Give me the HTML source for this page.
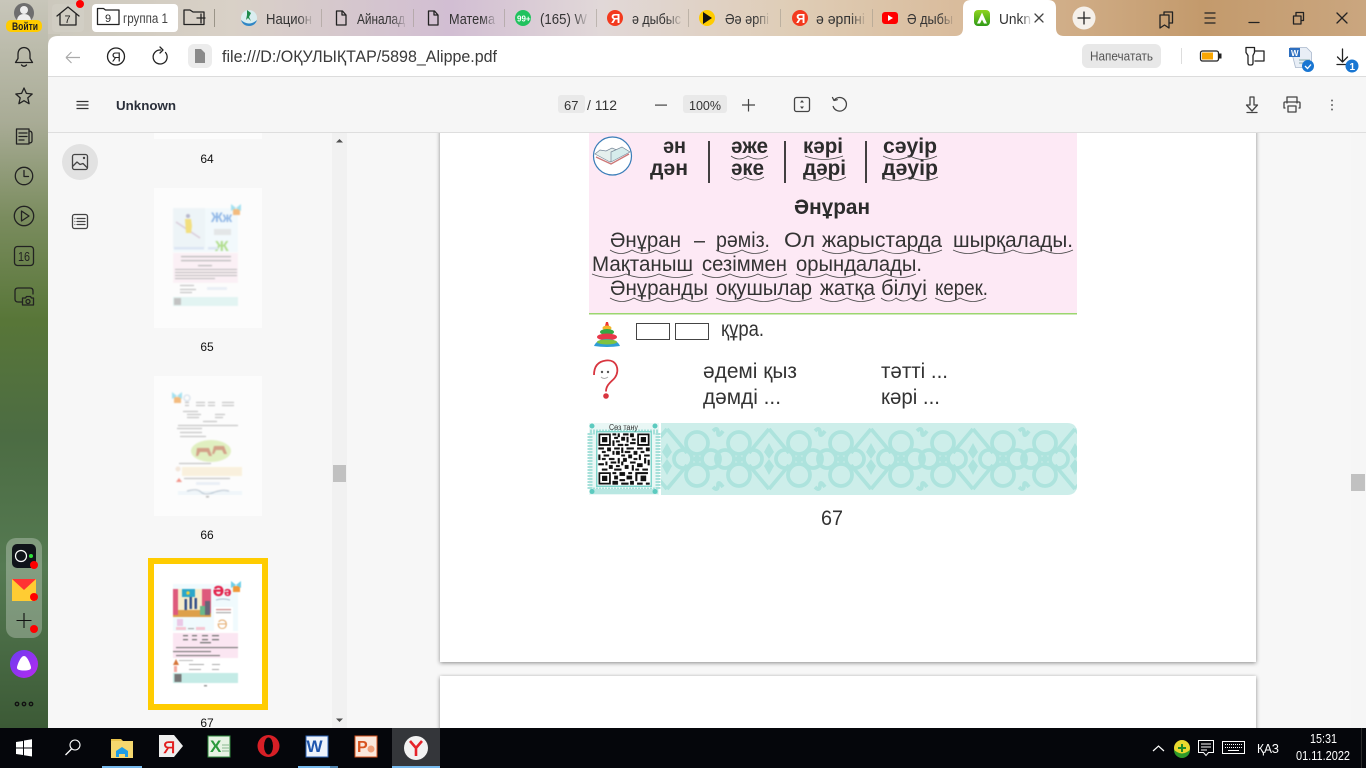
<!DOCTYPE html>
<html lang="ru"><head><meta charset="utf-8"><title>Unknown</title>
<style>
html,body{margin:0;padding:0;width:1366px;height:768px;overflow:hidden;background:#000}
svg{display:block}
text{font-family:"Liberation Sans","DejaVu Sans","Noto Sans CJK SC",sans-serif}
.s{fill:none;stroke:#222;stroke-width:1.3;stroke-linecap:round;stroke-linejoin:round}
.g{fill:none;stroke:#444;stroke-width:1.3;stroke-linecap:round;stroke-linejoin:round}
.a{fill:none;stroke:#4a4a4a;stroke-width:.8}
.b{font-weight:bold;fill:#2c2c2c;font-size:21px}
.r{fill:#333;font-size:21px}
.tab{font-size:14.5px}
</style></head><body>
<svg width="1366" height="768" viewBox="0 0 1366 768" xmlns="http://www.w3.org/2000/svg">
<defs>
<linearGradient id="top" x1="0" x2="1" y1="0" y2="0">
<stop offset="0" stop-color="#c8c6ba"/><stop offset=".17" stop-color="#d9d1c7"/><stop offset=".33" stop-color="#d2bed3"/><stop offset=".44" stop-color="#e1d8d8"/><stop offset=".58" stop-color="#dfcdb6"/><stop offset=".72" stop-color="#d8b998"/><stop offset=".88" stop-color="#c39a6c"/><stop offset="1" stop-color="#caa67f"/>
</linearGradient>
<linearGradient id="side" x1="0" x2="0" y1="0" y2="1">
<stop offset="0" stop-color="#c8c6ba"/><stop offset=".17" stop-color="#a8ab95"/><stop offset=".3" stop-color="#7a8c5e"/><stop offset=".44" stop-color="#587638"/><stop offset=".6" stop-color="#4c6c43"/><stop offset=".78" stop-color="#557a52"/><stop offset="1" stop-color="#3c5a36"/>
</linearGradient>
<linearGradient id="fade" x1="0" x2="1" y1="0" y2="0"><stop offset=".7" stop-color="#333"/><stop offset="1" stop-color="#333" stop-opacity=".12"/></linearGradient>
<linearGradient id="alice" x1="0" x2="1" y1="0" y2="1"><stop offset="0" stop-color="#6a3df0"/><stop offset="1" stop-color="#b82af0"/></linearGradient>
<linearGradient id="gA" x1="0" x2="0" y1="0" y2="1"><stop offset="0" stop-color="#8fd41e"/><stop offset="1" stop-color="#2f9a17"/></linearGradient>
<filter id="sh" x="-3%" y="-3%" width="106%" height="106%"><feDropShadow dx="0" dy="1" stdDeviation="2" flood-color="#000" flood-opacity=".45"/></filter>
<pattern id="orn" x="667" y="423" width="102" height="72" patternUnits="userSpaceOnUse">
<g fill="none" stroke="#ade3dd" stroke-width="3.8">
<path d="M0 6Q12 20 20 30M0 66Q12 52 20 42M102 6Q90 20 82 30M102 66Q90 52 82 42"/>
<circle cx="30" cy="20" r="11"/><circle cx="30" cy="52" r="11"/><circle cx="16" cy="36" r="9"/><circle cx="44" cy="36" r="9"/>
<circle cx="72" cy="20" r="11"/><circle cx="72" cy="52" r="11"/><circle cx="58" cy="36" r="9"/><circle cx="86" cy="36" r="9"/>
<path d="M46 8q5-5 5 2q0 5 5-2M46 64q5 5 5-2q0-5 5 2"/>
</g>
<path d="M0 20l5 9-5 7-5-7zM102 20l5 9-5 7-5-7zM0 52l5-9-5-7-5 7zM102 52l5-9-5-7-5 7zM30 31l5 5-5 5-5-5zM72 31l5 5-5 5-5-5z" fill="#ade3dd"/>
</pattern>
</defs>

<!-- chrome backgrounds -->
<rect width="1366" height="36" fill="url(#top)"/>
<rect y="0" width="48" height="728" fill="url(#side)"/>
<rect x="48" y="34" width="12" height="14" fill="#c6c3b6"/>
<path d="M48 768V46q0-10 10-10H1366V768z" fill="#fff"/>
<rect x="48" y="133" width="1318" height="595" fill="#f7f7f7"/>
<rect x="332" y="133" width="15" height="595" fill="#f1f1f1"/>

<!-- PDF pages (beneath toolbar) -->
<rect x="440" y="120" width="816" height="542" fill="#fff" filter="url(#sh)"/>
<rect x="440" y="676" width="816" height="70" fill="#fff" filter="url(#sh)"/>
<rect x="1351" y="133" width="15" height="595" fill="#f6f6f6"/>
<rect x="1351" y="474" width="14" height="17" fill="#c1c1c1"/>

<rect x="48" y="76" width="1318" height="1" fill="#dcdcdc"/>
<rect x="48" y="77" width="1318" height="55" fill="#f6f6f6"/>
<rect x="48" y="132" width="1318" height="1" fill="#dedede"/>

<!-- top-left account -->
<circle cx="24" cy="13" r="10" fill="#6e6e6e"/>
<circle cx="24" cy="10" r="4" fill="#eee"/><path d="M17 20q1-6 7-6t7 6z" fill="#eee"/>
<rect x="6" y="20" width="36" height="12" rx="5" fill="#fc0"/>
<text x="12" y="30" font-size="11" font-weight="bold" fill="#222" textLength="26" lengthAdjust="spacingAndGlyphs">Войти</text>
<rect x="52" y="4" width="32" height="28" rx="4" fill="#fff" fill-opacity=".08"/>
<path class="s" d="M57 16L68 7l11 9M60 14v11h16V14"/>
<text x="64.500" y="23" font-size="11" fill="#222">7</text>
<circle cx="80" cy="4" r="4" fill="#f00"/>
<rect x="92" y="4" width="86" height="28" rx="4" fill="#fff"/>
<path class="s" d="M97.500 24.500V8.500h6l2 1.500h13.500v14.500z"/>
<text x="105" y="22" font-size="11" fill="#222">9</text>
<text x="123" y="23" font-size="13.500" fill="#444" textLength="45" lengthAdjust="spacingAndGlyphs">группа 1</text>
<path class="s" d="M184 24.500V10h6l3 2h11v12.500zM197 18h8M201 14v9"/>
<g fill="#9a9488"><rect x="214" y="9" width="1" height="18"/><rect x="321" y="9" width="1" height="18" fill-opacity=".5"/><rect x="413" y="9" width="1" height="18" fill-opacity=".5"/><rect x="504" y="9" width="1" height="18" fill-opacity=".5"/><rect x="596" y="9" width="1" height="18" fill-opacity=".5"/><rect x="688" y="9" width="1" height="18" fill-opacity=".5"/><rect x="780" y="9" width="1" height="18" fill-opacity=".5"/><rect x="872" y="9" width="1" height="18" fill-opacity=".5"/></g>

<!-- tabs -->
<circle cx="249" cy="18" r="8" fill="#d9eef0"/><path d="M241 20q8 7 16 0-2 6-8 6t-8-6z" fill="#2f86c5"/><path d="M247 10l4 3-2 4 2 4-3-3-2 2 1-5z" fill="#1e8a4a"/>
<text class="tab" x="266" y="24" fill="url(#fade)" textLength="46" lengthAdjust="spacingAndGlyphs">Национ</text>
<path class="s" d="M336.500 11h6l3.500 4v10h-9.500zM342 11v4h4"/>
<text class="tab" x="357" y="24" fill="url(#fade)" textLength="48" lengthAdjust="spacingAndGlyphs">Айналад</text>
<path class="s" d="M428.500 11h6l3.500 4v10h-9.500zM434 11v4h4"/>
<text class="tab" x="449" y="24" fill="url(#fade)" textLength="46" lengthAdjust="spacingAndGlyphs">Матема</text>
<circle cx="523" cy="18" r="8" fill="#21c25e"/><text x="517" y="21.500" font-size="8" font-weight="bold" fill="#fff">99+</text>
<text class="tab" x="540" y="24" fill="url(#fade)" textLength="47" lengthAdjust="spacingAndGlyphs">(165) W</text>
<circle cx="615" cy="18" r="8" fill="#f33a1e"/><text x="611" y="23" font-size="13" font-weight="bold" fill="#fff">Я</text>
<text class="tab" x="632" y="24" fill="url(#fade)" textLength="49" lengthAdjust="spacingAndGlyphs">ә дыбыс</text>
<circle cx="707" cy="18" r="8" fill="#fc0"/><path d="M703 12l9 6-9 6z" fill="#111"/>
<text class="tab" x="725" y="24" fill="url(#fade)" textLength="44" lengthAdjust="spacingAndGlyphs">Әә әрпі</text>
<circle cx="800" cy="18" r="8" fill="#f33a1e"/><text x="796" y="23" font-size="13" font-weight="bold" fill="#fff">Я</text>
<text class="tab" x="816" y="24" fill="url(#fade)" textLength="49" lengthAdjust="spacingAndGlyphs">ә әрпіні</text>
<rect x="882" y="12" width="16" height="12" rx="3" fill="#f00"/><path d="M888 15l5 3-5 3z" fill="#fff"/>
<text class="tab" x="907" y="24" fill="url(#fade)" textLength="46" lengthAdjust="spacingAndGlyphs">Ә дыбы</text>
<path d="M955 36q8 0 8-8V8q0-8 8-8h77q8 0 8 8v20q0 8 8 8z" fill="#fff"/>
<rect x="974" y="10" width="16" height="16" rx="4" fill="url(#gA)"/><path d="M982 12.500l-5 11h3l2-4 2 4h3z" fill="#fff"/>
<text class="tab" x="999" y="24" fill="url(#fade)" textLength="32" lengthAdjust="spacingAndGlyphs">Unkn</text>
<path d="M1035 14l8 8M1043 14l-8 8" class="g"/>
<circle cx="1084" cy="18" r="11.500" fill="#f5f0ea"/><path d="M1084 12v12M1078 18h12" class="s"/>
<path class="s" d="M1160 15h9v13l-4.500-3-4.500 3zM1164 15v-3h8.500v11l-3 0"/>
<path class="s" d="M1205 13h10M1205 18h10M1205 23h10"/>
<path class="s" d="M1249 22.500h10"/>
<path class="s" d="M1293.500 16h7.500v8h-7.500zM1296 16v-3.500h7.500v8H1301"/>
<path class="s" d="M1337 13l10 10M1347 13l-10 10"/>

<!-- address bar -->
<path d="M66 57.500h14M66 57.500l5.500-5.500M66 57.500l5.500 5.500" fill="none" stroke="#aaa" stroke-width="1.200"/>
<circle cx="116" cy="56.500" r="8.500" class="s"/><text x="111.500" y="61.500" font-size="13" fill="#222">Я</text>
<path class="s" d="M165.500 52.500a7 7 0 1 1-5-2.500M160 47l3 3-3 3"/>
<rect x="188" y="44" width="24" height="24" rx="6" fill="#ececec"/><path d="M195 49h6l4 4v10h-10z" fill="#8a8a8a"/>
<text x="222" y="62" font-size="16.500" fill="#3a3a3a" textLength="275" lengthAdjust="spacingAndGlyphs">file:///D:/ОҚУЛЫҚТАР/5898_Alippe.pdf</text>
<rect x="1082" y="44" width="79" height="24" rx="6" fill="#e8e8e8"/>
<text x="1090" y="60.500" font-size="12.500" fill="#555" textLength="63" lengthAdjust="spacingAndGlyphs">Напечатать</text>
<rect x="1181" y="48" width="1" height="16" fill="#ddd"/>
<rect x="1200.500" y="51" width="18" height="10" rx="2" fill="none" stroke="#222" stroke-width="1.300"/><rect x="1202" y="52.500" width="11" height="7" fill="#f9a602"/><rect x="1219" y="53.500" width="2.500" height="5" fill="#222"/>
<path class="s" d="M1246 47.500h8.500v5l-1.500 3v7.500q0 2-2 2h-1q-2 0-2-2v-7.500l-2-3zM1255 51h9v10h-9"/>
<path d="M1290.500 47.500h16l5 5v15h-16z" fill="#e8eef6" stroke="#a9b8cc" stroke-width=".8"/><rect x="1289" y="48" width="11" height="9" fill="#2d6fc0"/><text x="1291" y="56" font-size="8" font-weight="bold" fill="#fff">W</text><path d="M1299 60h11M1299 63h9" stroke="#8aa" stroke-width="1"/>
<circle cx="1308" cy="66" r="6" fill="#1976d2"/><path d="M1305 66l2.500 2.500 3.500-4" fill="none" stroke="#fff" stroke-width="1.300"/>
<path class="s" d="M1342.500 49v13M1337.500 57l5 5 5-5M1337 64.500h10"/>
<circle cx="1352" cy="66" r="6.500" fill="#1976d2"/><text x="1349.500" y="70" font-size="10" font-weight="bold" fill="#fff">1</text>

<!-- PDF toolbar -->
<path d="M76.500 101.500h12M76.500 105h12M76.500 108.500h12" fill="none" stroke="#333" stroke-width="1.200"/>
<text x="116" y="110" font-size="13" font-weight="bold" fill="#2a2f3a" textLength="60" lengthAdjust="spacingAndGlyphs">Unknown</text>
<rect x="558" y="95" width="27" height="18" rx="3" fill="#e9e9e9"/>
<text x="564" y="110" font-size="13" fill="#333">67</text>
<text x="587" y="110" font-size="13.500" fill="#333" textLength="30" lengthAdjust="spacingAndGlyphs">/ 112</text>
<rect x="655" y="104.500" width="12" height="1.200" fill="#444"/>
<rect x="683" y="95" width="44" height="18" rx="3" fill="#e9e9e9"/>
<text x="689" y="110" font-size="13" fill="#333" textLength="32" lengthAdjust="spacingAndGlyphs">100%</text>
<path d="M748.500 99v12.500M742 105h13" stroke="#444" stroke-width="1.200"/>
<rect x="794.500" y="97.500" width="15" height="14" rx="2" class="g"/><path d="M802 100l-2 2.500h4zM802 109l-2-2.500h4z" fill="#444"/>
<path class="g" d="M834 100.500a6.800 6.800 0 1 1-.8 6M832.500 97.500l1.500 3 3.200-.8"/>
<path class="g" d="M1250 97h4v8h3.500l-5.500 6-5.500-6h3.500zM1247 112.500h10"/>
<path class="g" d="M1287 103v-6h10v6M1285 108h-1v-5q0-1 1-1h14q1 0 1 1v5h-1M1288 106h8v6h-8z" stroke-width="1.500"/>
<g fill="#666"><circle cx="1332" cy="100.500" r="1"/><circle cx="1332" cy="105" r="1"/><circle cx="1332" cy="109.500" r="1"/></g>

<!-- left rail -->
<path class="s" d="M24 47.500q-6 .5-6 7v4l-2.500 4h17l-2.500-4v-4q0-6.500-6-7zM21.500 65q2.500 2.500 5 0"/>
<path class="s" d="M24 88l2.400 5.400 5.800.6-4.400 3.900 1.300 5.800-5.100-3-5.100 3 1.300-5.800-4.400-3.900 5.800-.6z"/>
<path class="s" d="M16.500 129h12.500v15h-12.500zM29 131q3 0 3 3v7q0 2-3 2M19 133h8M19 136.500h8M19 140h5"/>
<circle cx="24" cy="176" r="8.700" class="s"/><path class="s" d="M24 170.500v6h4.500"/>
<circle cx="24" cy="216" r="9.700" class="s"/><path class="s" d="M21.500 211v10l7.500-5z"/>
<rect x="14.500" y="246.500" width="19" height="19" rx="3" class="s"/><text x="18" y="261" font-size="13" fill="#222" textLength="12" lengthAdjust="spacingAndGlyphs">16</text>
<path class="s" d="M22 302h-4q-3 0-3-3v-8q0-3 3-3h12q3 0 3 3v3M22.500 298h3l1-1.500h4l1 1.500h2v7h-11z"/><circle cx="28" cy="301.500" r="2" class="s"/>
<rect x="6" y="538" width="36" height="100" rx="10" fill="#fff" fill-opacity=".27"/>
<rect x="12" y="544" width="24" height="24" rx="5" fill="#10141a"/><circle cx="21" cy="556" r="5.500" fill="none" stroke="#fff" stroke-width="1.200"/><circle cx="31" cy="556" r="2" fill="#2fe03a"/><circle cx="34" cy="565" r="4" fill="#f00"/>
<path d="M12 579h24v22H12z" fill="#fc3"/><path d="M12 579h24l-12 11z" fill="#f33"/><circle cx="34" cy="597" r="4" fill="#f00"/>
<path d="M24 613v15M16.500 620.500h15" stroke="#111" stroke-width="1.100"/><circle cx="34" cy="629" r="4" fill="#f00"/>
<circle cx="24" cy="664" r="14" fill="url(#alice)"/><path d="M24 656c3 0 6 7 7 11 .5 3-3 3.500-7 3.500s-7.500-.5-7-3.500c1-4 4-11 7-11z" fill="#fff"/>
<g fill="none" stroke="#111" stroke-width="1.400"><circle cx="17" cy="704" r="1.700"/><circle cx="24" cy="704" r="1.700"/><circle cx="31" cy="704" r="1.700"/></g>

<!-- side panel buttons -->
<circle cx="80" cy="162" r="18" fill="#e2e2e2"/>
<rect x="72.500" y="154.500" width="15" height="15" rx="2" class="g"/><path class="g" d="M73 166l4-4 3 2.500 3-1 4 4"/><circle cx="84" cy="158" r="1.200" fill="#444"/>
<rect x="72.500" y="214.500" width="15" height="14" rx="2" class="g"/><path class="g" d="M77 218.500h8M77 221.500h8M77 224.500h8"/><path d="M74.500 218.500h.8M74.500 221.500h.8M74.500 224.500h.8" stroke="#444" stroke-width="1.300"/>

<!-- thumbnails -->
<rect x="154" y="133" width="108" height="6" fill="#fcfcfc"/>
<rect x="154" y="188" width="108" height="140" fill="#fcfcfc"/>
<rect x="154" y="376" width="108" height="140" fill="#fcfcfc"/>
<rect x="148" y="558" width="120" height="152" fill="#fc0"/>
<rect x="154" y="564" width="108" height="140" fill="#fff"/>
<g font-size="12" fill="#111" text-anchor="middle"><text x="207" y="163">64</text><text x="207" y="351">65</text><text x="207" y="539">66</text><text x="207" y="727">67</text></g>

<!-- thumb 65 -->
<g style="filter:blur(.7px)" opacity=".7">
<rect x="173" y="208" width="65" height="44" fill="#eef8fc"/>
<rect x="173" y="208" width="32" height="40" fill="#e8f1f5"/>
<path d="M176 222l24 16" stroke="#cbb8cc" stroke-width="1.500"/><path d="M185 219h6l1 7-1 7h-5z" fill="#eed34a"/><circle cx="188" cy="216" r="2" fill="#9a9ab8"/>
<text x="211" y="222" font-size="14" font-weight="bold" fill="#5b95dd" textLength="21" lengthAdjust="spacingAndGlyphs">Жж</text>
<rect x="233" y="209" width="7" height="6" fill="#f0a04a"/><path d="M231 204l5 4 5-4v7l-5-3-5 3z" fill="#7fd6ec"/>
<rect x="214" y="229" width="17" height="6" fill="#ccc" fill-opacity=".6"/>
<text x="215" y="251" font-size="15" font-weight="bold" fill="#8ed05a">Ж</text>
<rect x="174" y="247" width="30" height="2.500" fill="#cfdcf0"/><rect x="208" y="247" width="10" height="2.500" fill="#cfdcf0"/>
<rect x="173" y="253" width="65" height="30" fill="#fbecf3"/>
<g fill="#999"><rect x="181" y="256" width="50" height="1.200"/><rect x="181" y="260" width="50" height="1.200"/><rect x="198" y="265" width="14" height="1.200"/><rect x="175" y="269" width="62" height="1"/><rect x="175" y="272" width="62" height="1"/><rect x="175" y="275" width="62" height="1"/><rect x="175" y="278" width="40" height="1"/><rect x="180" y="285" width="14" height="1"/><rect x="180" y="289" width="16" height="1"/><rect x="180" y="292" width="12" height="1"/></g>
<rect x="207" y="287" width="20" height="3" fill="#e2e9f3"/>
<rect x="173" y="297" width="65" height="9" fill="#d8f1ee"/><rect x="174" y="298" width="7" height="7" fill="#aaa"/>
</g>

<!-- thumb 66 -->
<g style="filter:blur(.7px)" opacity=".7">
<rect x="174" y="397" width="7" height="6" fill="#f0a04a"/><path d="M172 392l5 4 5-4v7l-5-3-5 3z" fill="#7fd6ec"/>
<circle cx="187" cy="398" r="3" fill="none" stroke="#bcd"/>
<g fill="#999"><rect x="185" y="402" width="4" height="1"/><rect x="185" y="405" width="4" height="1"/><rect x="196" y="402" width="9" height="1"/><rect x="196" y="405" width="9" height="1"/><rect x="208" y="402" width="7" height="1"/><rect x="208" y="405" width="7" height="1"/><rect x="222" y="402" width="12" height="1"/><rect x="222" y="405" width="12" height="1"/><rect x="183" y="411" width="15" height="1"/><rect x="187" y="414" width="14" height="1"/><rect x="187" y="417" width="12" height="1"/><rect x="215" y="414" width="10" height="1"/><rect x="215" y="417" width="8" height="1"/><rect x="203" y="421" width="14" height="1"/><rect x="178" y="425" width="60" height="1"/><rect x="177" y="428" width="25" height="1"/><rect x="180" y="432" width="22" height="1"/><rect x="180" y="436" width="26" height="1"/><rect x="179" y="463" width="32" height="1"/><rect x="184" y="478" width="46" height="1"/></g>
<ellipse cx="211" cy="451" rx="20" ry="11" fill="#d5eaa8"/><path d="M197 448h12l3 8h-3l-2-4h-7l-2 4h-2zM214 446h10l3 8h-3l-2-4h-6l-2 4h-2z" fill="#c27a58"/>
<rect x="182" y="467" width="60" height="9" fill="#f9ecd0"/>
<circle cx="178" cy="469" r="2.500" fill="#edc"/><path d="M176 482l3-4 3 4z" fill="#e65"/>
<rect x="196" y="482" width="24" height="3" fill="#e2e9f3"/>
<path d="M178 492h64M178 494h64" stroke="#cde5f2" stroke-width=".7"/><path d="M187 491q10-3 14 1t14 0q8-3 14-1" fill="none" stroke="#9ab" stroke-width="1"/>
<rect x="206" y="496" width="3" height="1.500" fill="#999"/>
</g>

<!-- thumb 67 -->
<g style="filter:blur(.6px)">
<rect x="173" y="584" width="65" height="47" fill="#f0fafd"/>
<rect x="173" y="589" width="38" height="28" fill="#f7ecca"/>
<rect x="173" y="610" width="38" height="7" fill="#dda04a"/>
<rect x="173" y="589" width="5" height="26" fill="#de5a7c"/><rect x="202" y="589" width="9" height="24" fill="#de5a7c"/>
<rect x="182" y="589" width="13" height="8" fill="#2aa6c9"/><circle cx="188" cy="593" r="1.700" fill="#f0d040"/>
<rect x="184.500" y="599" width="2.500" height="11" fill="#33508a"/><rect x="189.500" y="597" width="2.500" height="12" fill="#33508a"/><rect x="194.500" y="598" width="2.500" height="11" fill="#33508a"/>
<rect x="205" y="601" width="5" height="14" fill="#667"/><rect x="200" y="606" width="5" height="9" fill="#6ab88a"/>
<text x="213" y="596" font-size="15" font-weight="bold" fill="#e3214a" stroke="#e3214a" stroke-width=".4">Ә</text><text x="224" y="596" font-size="13" font-weight="bold" fill="#e3214a" stroke="#e3214a" stroke-width=".3">ә</text>
<rect x="233" y="586" width="7" height="6" fill="#f0983a"/><path d="M231 581l5 4 5-4v7l-5-3-5 3z" fill="#6fd0ea"/>
<path d="M216 600q7-2 14 0" stroke="#abc" fill="none"/>
<rect x="214" y="607" width="19" height="24" fill="#fff"/><rect x="216" y="609" width="15" height="1.200" fill="#c88"/><rect x="216" y="612" width="15" height="1.200" fill="#aaa"/>
<text x="217" y="629" font-size="14" fill="#e6b27a">Ә</text>
<rect x="177" y="619" width="6" height="7" fill="#eac8e6"/>
<rect x="176" y="627" width="10" height="3" fill="#f6c6d2"/><rect x="188" y="628" width="6" height="1.200" fill="#aaa"/><rect x="196" y="627" width="9" height="3" fill="#f6c6d2"/>
<rect x="173" y="633" width="65" height="25" fill="#fbe6f2"/>
<g fill="#777"><rect x="183" y="635" width="5" height="1.300"/><rect x="183" y="639" width="5" height="1.300"/><rect x="192" y="635" width="5" height="1.300"/><rect x="192" y="639" width="5" height="1.300"/><rect x="202" y="635" width="6" height="1.300"/><rect x="202" y="639" width="6" height="1.300"/><rect x="212" y="635" width="7" height="1.300"/><rect x="212" y="639" width="7" height="1.300"/><rect x="200" y="642" width="11" height="1.300"/><rect x="176" y="647" width="62" height="1.100"/><rect x="173" y="651" width="38" height="1.100"/><rect x="176" y="655" width="44" height="1.100"/><rect x="179" y="660" width="14" height="1" fill="#bbb"/><rect x="189" y="664" width="15" height="1" fill="#aaa"/><rect x="189" y="669" width="12" height="1" fill="#aaa"/><rect x="212" y="664" width="8" height="1" fill="#aaa"/><rect x="212" y="669" width="7" height="1" fill="#aaa"/></g>
<path d="M173 665l3-6 3 6z" fill="#d5763a"/><rect x="174" y="666" width="3" height="6" fill="#f4a9a0"/>
<rect x="173" y="673" width="65" height="10" fill="#c4ebe6"/><rect x="174.500" y="674" width="7" height="8" fill="#777"/>
<rect x="204" y="685" width="3" height="1.500" fill="#999"/>
</g>

<!-- side scrollbar -->
<path d="M339.500 139l-3.500 3.500h7z" fill="#505050"/>
<rect x="333" y="465" width="13" height="17" fill="#c1c1c1"/>
<path d="M339.500 722l-3.500-3.500h7z" fill="#505050"/>

<!-- PDF page content -->
<g style="filter:blur(.3px)">
<rect x="589" y="133" width="488" height="180" fill="#fde9f5"/>
<rect x="589" y="313" width="488" height="1.500" fill="#9bd66f"/>
<!-- book icon -->
<circle cx="612.500" cy="156" r="19" fill="#fff" stroke="#3a7db8" stroke-width="1.200"/>
<path d="M595 154l15 8 12-10 -10-4-6 3-6-1z" fill="#e6f0ee" stroke="#789" stroke-width=".7"/><path d="M611 162l19-10-8-5-11 5z" fill="#d6ecec" stroke="#789" stroke-width=".7"/><path d="M596 157l15 7 18-10" fill="none" stroke="#c77" stroke-width="1.300"/>
<text x="663" y="153" class="b" textLength="23" lengthAdjust="spacingAndGlyphs">ән</text>
<text x="650" y="175" class="b" textLength="38" lengthAdjust="spacingAndGlyphs">дән</text>
<text x="731" y="153" class="b" textLength="37" lengthAdjust="spacingAndGlyphs">әже</text>
<text x="731" y="175" class="b" textLength="33" lengthAdjust="spacingAndGlyphs">әке</text>
<text x="803" y="153" class="b" textLength="40" lengthAdjust="spacingAndGlyphs">кәрі</text>
<text x="803" y="175" class="b" textLength="43" lengthAdjust="spacingAndGlyphs">дәрі</text>
<text x="883" y="153" class="b" textLength="54" lengthAdjust="spacingAndGlyphs">сәуір</text>
<text x="882" y="175" class="b" textLength="56" lengthAdjust="spacingAndGlyphs">дәуір</text>
<path d="M709 141v42M785 141v42M866 141v42" stroke="#222" stroke-width="1.700"/>
<path class="a" d="M731 156q8 6 17 0q10 6 20 0M731 177q7 6 14 0q10 6 19 0M805 156q19 7 38 0M803 177q11 7 22 0q10 7 21 0M883 156q13 7 27 0q13 7 27 0M882 177q14 7 28 0q14 7 28 0"/>
<text x="794" y="214" class="b" textLength="76" lengthAdjust="spacingAndGlyphs">Әнұран</text>
<text x="610" y="247" class="r" textLength="71" lengthAdjust="spacingAndGlyphs">Әнұран</text>
<text x="694" y="247" class="r" textLength="11" lengthAdjust="spacingAndGlyphs">–</text>
<text x="716" y="247" class="r" textLength="54" lengthAdjust="spacingAndGlyphs">рәміз.</text>
<text x="784" y="247" class="r" textLength="31" lengthAdjust="spacingAndGlyphs">Ол</text>
<text x="822" y="247" class="r" textLength="120" lengthAdjust="spacingAndGlyphs">жарыстарда</text>
<text x="953" y="247" class="r" textLength="120" lengthAdjust="spacingAndGlyphs">шырқалады.</text>
<text x="592" y="271" class="r" textLength="101" lengthAdjust="spacingAndGlyphs">Мақтаныш</text>
<text x="702" y="271" class="r" textLength="85" lengthAdjust="spacingAndGlyphs">сезіммен</text>
<text x="796" y="271" class="r" textLength="126" lengthAdjust="spacingAndGlyphs">орындалады.</text>
<text x="610" y="295" class="r" textLength="98" lengthAdjust="spacingAndGlyphs">Әнұранды</text>
<text x="716" y="295" class="r" textLength="96" lengthAdjust="spacingAndGlyphs">оқушылар</text>
<text x="820" y="295" class="r" textLength="55" lengthAdjust="spacingAndGlyphs">жатқа</text>
<text x="881" y="295" class="r" textLength="46" lengthAdjust="spacingAndGlyphs">білуі</text>
<text x="935" y="295" class="r" textLength="53" lengthAdjust="spacingAndGlyphs">керек.</text>
<path class="a" d="M610 250q11 7 22 0q12 7 24 0q12 7 24 0M716 250q13 7 26 0q13 7 26 0M822 250q15 7 30 0q15 7 30 0q15 7 30 0q15 7 30 0M953 250q15 7 30 0q15 7 30 0q15 7 30 0q15 7 30 0M592 274q17 7 34 0q17 7 33 0q17 7 34 0M702 274q14 7 28 0q14 7 28 0q14 7 29 0M796 274q15 7 30 0q15 7 30 0q15 7 30 0q15 7 30 0M610 298q12 7 24 0q12 7 24 0q12 7 25 0q12 7 25 0M716 298q16 7 32 0q16 7 32 0q16 7 32 0M820 298q14 7 27 0q14 7 28 0M881 298q8 6 15 0q8 6 15 0q8 6 16 0M935 298q13 7 25 0q13 7 26 0"/>
<!-- pyramid -->
<path d="M606 322h2l1 4h-4z" fill="#e33"/><ellipse cx="607" cy="328" rx="4.500" ry="2.500" fill="#f4b52b"/><ellipse cx="607" cy="332" rx="7" ry="3" fill="#35a845"/><ellipse cx="607" cy="337" rx="10" ry="3.500" fill="#e8384a"/><path d="M594 346q3-7 13-7t13 7q-13 2-26 0z" fill="#2f9dd6"/><ellipse cx="607" cy="342" rx="10" ry="2.500" fill="#7fc240"/>
<rect x="636.500" y="323.500" width="33" height="16" fill="#fff" stroke="#444"/>
<rect x="675.500" y="323.500" width="33" height="16" fill="#fff" stroke="#444"/>
<text x="721" y="336" class="r" textLength="43" lengthAdjust="spacingAndGlyphs">құра.</text>
<!-- question -->
<path d="M594 375q0-13 12-14.500c11-1.500 14 10 9 17-3 4-9 7-9 14" fill="none" stroke="#d8353f" stroke-width="1.800"/><circle cx="606" cy="396" r="2.800" fill="#d8353f"/>
<circle cx="602" cy="372" r="1.200" fill="#555"/><circle cx="608" cy="372" r="1.200" fill="#555"/><path d="M601 377q3 3 7 0" stroke="#aaa" fill="none"/>
<text x="703" y="378" class="r" textLength="94" lengthAdjust="spacingAndGlyphs">әдемі қыз</text>
<text x="703" y="404" class="r" textLength="78" lengthAdjust="spacingAndGlyphs">дәмді ...</text>
<text x="881" y="378" class="r" textLength="67" lengthAdjust="spacingAndGlyphs">тәтті ...</text>
<text x="881" y="404" class="r" textLength="59" lengthAdjust="spacingAndGlyphs">кәрі ...</text>
<!-- band -->
<path d="M661 423h406q10 0 10 10v52q0 10-10 10H661z" fill="#cdeeea"/>
<path d="M661 423h406q10 0 10 10v52q0 10-10 10H661z" fill="url(#orn)"/>
<rect x="589" y="423" width="70" height="72" fill="#e9f7f5"/>
<rect x="590" y="432" width="68" height="58" fill="none" stroke="#a6e0da" stroke-width="5" stroke-dasharray="2 1"/>
<rect x="590" y="489" width="68" height="5" fill="#b9e7e2"/>
<g fill="#5ccabf"><circle cx="592" cy="426" r="2.500"/><circle cx="655" cy="426" r="2.500"/><circle cx="592" cy="491.500" r="2.500"/><circle cx="655" cy="491.500" r="2.500"/></g>
<rect x="596" y="431" width="56" height="56" fill="#7fd6cc"/>
<rect x="597.500" y="432.500" width="53" height="53" fill="#fff"/>
<text x="609" y="430" font-size="8" fill="#333" textLength="29" lengthAdjust="spacingAndGlyphs">Сөз тану</text>
<g transform="translate(598.500 433.500) scale(1.760)" fill="#111" stroke="#111" stroke-width=".2">
<path fill-rule="evenodd" d="M0 0h7v7H0zM1 1v5h5V1zM2 2h3v3H2zM22 0h7v7h-7zM23 1v5h5V1zM24 2h3v3h-3zM0 22h7v7H0zM1 23v5h5v-5zM2 24h3v3H2z" stroke="none"/>
<path d="M8 0h2v1H8zM11 0h1v2h-1zM14 0h3v1h-3zM18 0h2v2h-2zM9 2h2v1H9zM13 2h2v2h-2zM16 2h1v3h-1zM19 3h2v1h-2zM8 4h1v3H8zM10 4h2v1h-2zM18 5h3v1h-3zM11 6h3v1h-3zM15 6h2v1h-2zM9 8h3v1H9zM13 8h1v3h-1zM16 8h4v1h-4zM22 8h3v1h-3zM27 8h2v2h-2zM0 8h3v1H0zM5 8h2v2H5zM2 10h2v1H2zM8 10h1v2H8zM10 10h2v2h-2zM15 10h3v1h-3zM20 10h2v2h-2zM24 10h2v1h-2zM0 12h1v3H0zM3 12h3v1H3zM13 12h2v1h-2zM17 12h2v2h-2zM23 12h1v3h-1zM26 12h3v1h-3zM2 14h2v1H2zM6 14h3v1H6zM11 14h1v3h-1zM14 14h2v2h-2zM20 14h2v1h-2zM26 14h1v3h-1zM4 16h1v2H4zM7 16h3v1H7zM13 16h1v2h-1zM18 16h3v1h-3zM28 15h1v3h-1zM0 17h3v1H0zM6 18h2v2H6zM10 18h2v1h-2zM15 18h2v2h-2zM19 18h1v3h-1zM22 17h3v2h-3zM2 20h3v1H2zM9 20h4v1H9zM21 20h2v1h-2zM25 20h3v1h-3zM8 22h2v1H8zM12 22h3v2h-3zM17 22h2v1h-2zM21 22h7v1h-7zM21 23h1v4h-1zM24 24h3v3h-3zM9 24h2v2H9zM16 24h3v2h-3zM8 27h3v2H8zM12 26h3v1h-3zM13 28h4v1h-4zM18 27h2v2h-2zM22 28h3v1h-3zM27 28h2v1h-2z"/>
</g>
<text x="821" y="525" font-size="21" fill="#333" textLength="22" lengthAdjust="spacingAndGlyphs">67</text>
</g>

<!-- taskbar -->
<rect y="728" width="1366" height="40" fill="#05060b"/>
<path d="M16 742l7-1v6.500h-7zM24 740.500l8-1.200v8.200h-8zM16 748.500h7v6.500l-7-1zM24 748.500h8v8l-8-1.200z" fill="#fff"/>
<circle cx="75" cy="745" r="5" fill="none" stroke="#fff" stroke-width="1.100"/><path d="M71.500 749l-6 6" stroke="#fff" stroke-width="1.300"/>
<path d="M111 741h22v17h-22z" fill="#f5d76e"/><path d="M111 739h10l2 2h-12z" fill="#e9c34c"/><path d="M116 757v-6l6-4 6 4v6h-3v-3h-6v3z" fill="#1e9de6"/>
<rect x="102" y="766" width="40" height="2" fill="#76b9ed"/>
<path d="M159 735h15l9 11-9 11h-15z" fill="#eee"/><text x="163" y="753" font-size="17" fill="#e21c1c" stroke="#e21c1c" stroke-width=".4">Я</text>
<rect x="208" y="736" width="22" height="21" fill="#e7f3e4" stroke="#2f8a3e"/><text x="210" y="752" font-size="17" font-weight="bold" fill="#2a9a3c">X</text><path d="M222 745h7M222 748h7M222 751h7" stroke="#8ab88f"/>
<ellipse cx="268.500" cy="746" rx="11" ry="11" fill="#d81f26"/><ellipse cx="268.500" cy="746" rx="4.500" ry="8.500" fill="#05060b"/>
<rect x="306" y="736" width="22" height="21" fill="#eef3fb" stroke="#2b62b4"/><text x="306.500" y="752" font-size="17" font-weight="bold" fill="#1f55ad">W</text>
<rect x="298" y="766" width="32" height="2" fill="#76b9ed"/><rect x="330" y="766" width="8" height="2" fill="#4f82ad"/>
<rect x="355" y="736" width="22" height="21" fill="#fbe8dc" stroke="#d8531e"/><text x="357" y="752" font-size="16" font-weight="bold" fill="#d8531e">P</text><circle cx="371" cy="749" r="3.500" fill="#f0a07a"/>
<rect x="392" y="728" width="48" height="40" fill="#34363a"/>
<circle cx="416" cy="748" r="12" fill="#f2f2f2"/><path d="M410 741l6 7 6-7M416 748v8" fill="none" stroke="#e6232a" stroke-width="2.600"/>
<rect x="392" y="766" width="48" height="2" fill="#76b9ed"/>
<path d="M1153 751l5.500-5 5.500 5" fill="none" stroke="#fff" stroke-width="1.200"/>
<circle cx="1182" cy="748" r="8" fill="#e9d92f"/><path d="M1174 750a8 8 0 0 0 16 0l-3 2q-5 3-10 0z" fill="#2f9a2a"/><path d="M1182 744v8M1178 748h8" stroke="#1f8a2a" stroke-width="2"/>
<path d="M1198.500 740.500h15v12h-5l-2.500 3-2.500-3h-5zM1201 744h10M1201 747h10M1201 750h6" fill="none" stroke="#fff"/>
<rect x="1222.500" y="741.500" width="22" height="12" fill="none" stroke="#fff"/><path d="M1225 744.500h17M1225 747.500h17" stroke="#fff" stroke-dasharray="1 1"/><path d="M1228 750.500h11" stroke="#fff"/>
<text x="1257" y="753" font-size="12.500" fill="#fff" textLength="22" lengthAdjust="spacingAndGlyphs">ҚАЗ</text>
<text x="1310" y="743" font-size="12.500" fill="#fff" textLength="27" lengthAdjust="spacingAndGlyphs">15:31</text>
<text x="1296" y="760" font-size="12.500" fill="#fff" textLength="54" lengthAdjust="spacingAndGlyphs">01.11.2022</text>
<rect x="1361" y="728" width="1" height="40" fill="#2a2a2a"/>
</svg>
</body></html>
